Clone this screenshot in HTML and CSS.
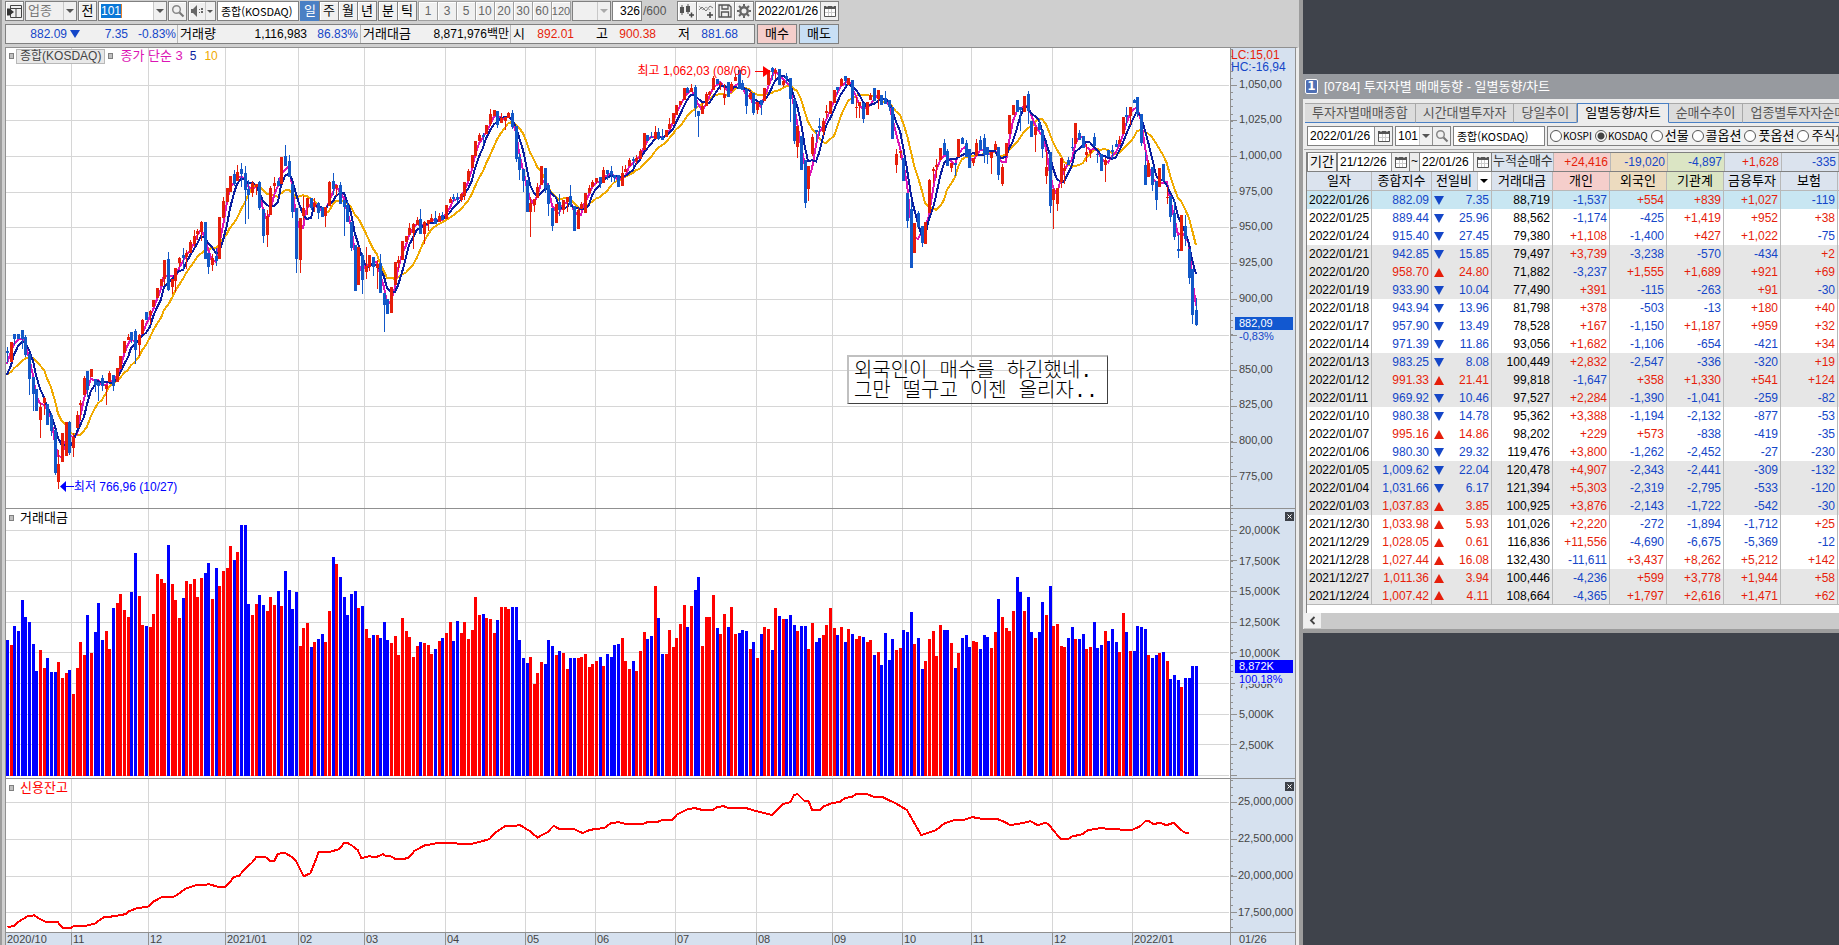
FILE: index.html
```html
<!DOCTYPE html>
<html lang="ko">
<head>
<meta charset="utf-8">
<title>종합(KOSDAQ) 차트</title>
<link rel="stylesheet" href="styles.css">
</head>
<body>
<main class="desk">
  <section class="win chart-win" aria-label="업종 차트">
    <div class="toolbar">
      <button class="btn w19" aria-label="창 전환"><svg width="15" height="13" viewBox="0 0 15 13"><path d="M3.500 5V.5h11v12h-11V8 M3.500 3.500h11 M9 3v9" fill="none" stroke="#444"/><path d="M0 3.500h2.500L7 7l-4.500 3.500H0z" fill="#333"/></svg></button>
      <div class="combo off w52"><select aria-label="구분"><option>업종</option></select><i class="arr"></i></div>
      <button class="btn ko w19">전</button>
      <div class="combo code"><input class="sel" aria-label="업종코드" value="101"><i class="arr"></i></div>
      <button class="btn w19" aria-label="검색"><svg class="ic" viewBox="0 0 14 14"><circle cx="5.500" cy="5.500" r="3.800" fill="none" stroke="#888" stroke-width="1.500"/><path d="M8.500 8.500l4 4" stroke="#777" stroke-width="2.200"/></svg></button>
      <button class="btn snd" aria-label="소리"><svg class="spk" width="14" height="12" viewBox="0 0 14 12"><path d="M1 4h2l4-4v12L3 8H1z" fill="#666"/><path d="M9 4h1v1H9zM9 7h1v1H9zM11 3h2v2h-2zM11 6h2v2h-2z" fill="#666"/></svg><i class="arr"></i></button>
      <input class="box name" aria-label="종목명" value="종합(KOSDAQ)">
      <div class="grp ko"><button class="btn on">일</button><button class="btn">주</button><button class="btn">월</button><button class="btn">년</button></div>
      <div class="grp ko"><button class="btn">분</button><button class="btn">틱</button></div>
      <div class="grp dim"><button class="btn">1</button><button class="btn">3</button><button class="btn">5</button><button class="btn">10</button><button class="btn">20</button><button class="btn">30</button><button class="btn">60</button><button class="btn">120</button></div>
      <div class="combo off w39"><select aria-label="분 선택"><option></option></select><i class="arr"></i></div>
      <input class="box cnt" aria-label="표시 개수" value="326"><span class="total">/600</span>
      <div class="grp tools">
        <button class="btn" aria-label="봉 추가"><svg class="ic" viewBox="0 0 14 14"><path d="M0 3h4v6H0zM6 2h4v6H6z" fill="#555"/><path d="M2 1v10M8 0v10" stroke="#555"/><path d="M9 11h5M11.500 8.500v5" stroke="#444" stroke-width="1.500"/></svg></button>
        <button class="btn" aria-label="지표 추가"><svg class="ic" viewBox="0 0 14 14"><path d="M0 6l3-3 4 4 4-5 3 2" fill="none" stroke="#777"/><path d="M0 2l4 4 3-3 4 3" fill="none" stroke="#aaa"/><path d="M8 11h6M11 8v6" stroke="#444" stroke-width="1.500"/></svg></button>
        <button class="btn" aria-label="저장"><svg class="ic" viewBox="0 0 14 14"><path d="M1 1h10l2 2v10H1zM4 1v4h6V1M3.500 13V8h7v5" fill="none" stroke="#555" stroke-width="1.300"/></svg></button>
        <button class="btn" aria-label="설정"><svg class="ic" viewBox="0 0 14 14"><circle cx="7" cy="7" r="3.700" fill="none" stroke="#666" stroke-width="2.400"/><path d="M7 0v2.500M7 11.500V14M0 7h2.500M11.500 7H14M2 2l2 2M10 10l2 2M12 2l-2 2M4 10l-2 2" stroke="#666" stroke-width="2"/></svg></button>
      </div>
      <div class="combo date"><input aria-label="조회일" value="2022/01/26"><button class="cal" aria-label="달력"><svg class="ic" viewBox="0 0 14 14"><use href="#cal"/></svg></button></div>
    </div>
    <div class="quote">
      <div class="qbox">
        <span class="q q1 dn">882.09<b class="tri"></b></span><span class="q q2 dn">7.35</span><span class="q q3 dn">-0.83%</span>
        <span class="q ql q4">거래량</span><span class="q q5">1,116,983</span><span class="q q6 dn">86.83%</span>
        <span class="q ql q7">거래대금</span><span class="q q8">8,871,976백만</span>
        <span class="q ql q9">시</span><span class="q q10 up">892.01</span><span class="q q11 ko">고</span><span class="q q10 up">900.38</span><span class="q q11 ko">저</span><span class="q q10 dn">881.68</span>
      </div>
      <button class="btn ko buy">매수</button><button class="btn ko sell">매도</button>
    </div>
    <div class="chart">
      <div class="pane price">
        <div class="plot">
          <svg id="price" class="fill" viewBox="0 0 1224 461" preserveAspectRatio="none"></svg>
          <div class="legend"><i class="mk"></i><span class="cap">종합(KOSDAQ)</span><i class="mk"></i><span class="m3">종가 단순 3</span><span class="m5">5</span><span class="m10">10</span></div>
          <div class="hi">최고 1,062,03 (08/06)<svg width="20" height="11" viewBox="0 0 20 11"><path d="M4 5h8v1H4zM12 0l8 5.500-8 5.500z" fill="red"/></svg></div>
          <div class="lo"><svg width="14" height="11" viewBox="0 0 14 11"><path d="M14 5H6v1h8zM6 0L0 5.500 6 11z" fill="#00f"/></svg>최저 766,96 (10/27)</div>
          <div class="note">외국인이 매수를 하긴했네.
그만 떨구고 이젠 올리자..</div>
        </div>
        <div class="axis">
          <svg id="ax1" class="fill" viewBox="0 0 64 461" preserveAspectRatio="none"></svg>
          <div class="lims"><span class="up">LC:15,01</span><span class="dn">HC:-16,94</span></div>
          <div class="labels l1"><span>1,050,00</span><span>1,025,00</span><span>1,000,00</span><span>975,00</span><span>950,00</span><span>925,00</span><span>900,00</span><span></span><span>850,00</span><span>825,00</span><span>800,00</span><span>775,00</span></div>
          <div class="tag t1"><b>882,09</b><span>-0,83%</span></div>
        </div>
      </div>
      <div class="pane volume">
        <div class="plot">
          <svg id="volume" class="fill" viewBox="0 0 1224 268" preserveAspectRatio="none"></svg>
          <div class="legend sub"><i class="mk"></i><span class="pt">거래대금</span></div>
        </div>
        <div class="axis">
          <svg id="ax2" class="fill" viewBox="0 0 64 268" preserveAspectRatio="none"></svg>
          <div class="labels l2"><span>20,000K</span><span>17,500K</span><span>15,000K</span><span>12,500K</span><span>10,000K</span><span>7,500K</span><span>5,000K</span><span>2,500K</span></div>
          <div class="tag t2"><b>8,872K</b><span>100,18%</span></div>
          <button class="x" aria-label="닫기"><svg width="9" height="9" viewBox="0 0 9 9"><path d="M2.500 2.500l4 4M6.500 2.500l-4 4" stroke="#fff"/></svg></button>
        </div>
      </div>
      <div class="pane credit">
        <div class="plot">
          <svg id="credit" class="fill" viewBox="0 0 1224 153" preserveAspectRatio="none"></svg>
          <div class="legend sub"><i class="mk"></i><span class="pt red">신용잔고</span></div>
        </div>
        <div class="axis">
          <svg id="ax3" class="fill" viewBox="0 0 64 153" preserveAspectRatio="none"></svg>
          <div class="labels l3"><span>25,000,000</span><span>22,500,000</span><span>20,000,000</span><span>17,500,000</span></div>
          <button class="x" aria-label="닫기"><svg width="9" height="9" viewBox="0 0 9 9"><path d="M2.500 2.500l4 4M6.500 2.500l-4 4" stroke="#fff"/></svg></button>
        </div>
      </div>
      <div class="dates">
        <div class="months"><span>2020/10</span><span>11</span><span>12</span><span>2021/01</span><span>02</span><span>03</span><span>04</span><span>05</span><span>06</span><span>07</span><span>08</span><span>09</span><span>10</span><span>11</span><span>12</span><span>2022/01</span></div>
        <div class="today">01/26</div>
      </div>
    </div>
  </section>

  <section class="trend-win" aria-label="투자자별 매매동향">
    <h1 class="title"><span class="no">1</span>[0784] 투자자별 매매동향 - 일별동향/차트</h1>
    <nav class="tabs"><a href="#a">투자자별매매종합</a><a href="#b">시간대별투자자</a><a href="#c">당일추이</a><a href="#d" class="cur">일별동향/차트</a><a href="#e">순매수추이</a><a href="#f">업종별투자자순매수</a></nav>
    <div class="filter">
      <div class="combo fdate"><input aria-label="기준일" value="2022/01/26"><button class="cal" aria-label="달력"><svg class="ic" viewBox="0 0 14 14"><use href="#cal"/></svg></button></div>
      <div class="combo fcode"><input aria-label="코드" value="101"><i class="arr"></i><button class="cal" aria-label="검색"><svg class="ic" viewBox="0 0 14 14"><circle cx="5.500" cy="5.500" r="3.800" fill="none" stroke="#888" stroke-width="1.500"/><path d="M8.500 8.500l4 4" stroke="#777" stroke-width="2.200"/></svg></button></div>
      <input class="box name fname" aria-label="업종명" value="종합(KOSDAQ)">
      <div class="radios">
        <label class="en"><input type="radio" name="m">KOSPI</label><label class="en"><input type="radio" name="m" checked>KOSDAQ</label><label><input type="radio" name="m">선물</label><label><input type="radio" name="m">콜옵션</label><label><input type="radio" name="m">풋옵션</label><label><input type="radio" name="m">주식선물</label>
      </div>
    </div>
    <div class="grid">
      <div class="sum">
        <button class="btn ko term">기간</button>
        <div class="combo sdate"><input aria-label="시작일" value="21/12/26"><button class="cal" aria-label="달력"><svg class="ic" viewBox="0 0 14 14"><use href="#cal"/></svg></button></div>
        <span class="til">~</span>
        <div class="combo sdate"><input aria-label="종료일" value="22/01/26"><button class="cal" aria-label="달력"><svg class="ic" viewBox="0 0 14 14"><use href="#cal"/></svg></button></div>
        <span class="cum">누적순매수</span><span class="s pink up">+24,416</span><span class="s sand dn">-19,020</span><span class="s green dn">-4,897</span><span class="s up">+1,628</span><span class="s dn">-335</span><span class="s"></span>
      </div>
      <table>
        <colgroup><col class="c1"><col class="c2"><col class="c2"><col class="c3"><col class="c4"><col class="c4"><col class="c4"><col class="c4"><col class="c4"><col class="c4"></colgroup>
        <thead><tr><th>일자</th><th>종합지수</th><th class="cmp">전일비<button class="dd" aria-label="전일비 선택"><i class="arr"></i></button></th><th>거래대금</th><th class="pink">개인</th><th class="sand">외국인</th><th class="green">기관계</th><th>금융투자</th><th>보험</th><th></th></tr></thead>
        <tbody id="rows"></tbody>
      </table>
    </div>
    <div class="scroll"><button aria-label="왼쪽으로"><svg width="7" height="9" viewBox="0 0 7 9"><path d="M5.500 1L2 4.500 5.500 8" fill="none" stroke="#444" stroke-width="1.800"/></svg></button></div>
  </section>
</main>
<svg class="defs" aria-hidden="true"><symbol id="cal" viewBox="0 0 14 14"><path d="M1.500 3.500h11v9h-11z" fill="#fff" stroke="#555"/><path d="M1 2h12v3H1z" fill="#555"/><path d="M4 1v2M10 1v2" stroke="#fff"/><path d="M2 8.500h10M5.500 5v7M8.500 5v7" stroke="#ccc"/></symbol></svg>
<script src="app.js"></script>
</body>
</html>
```
FILE: styles.css
```css
* { box-sizing: border-box; }
html, body { height: 100%; }
body, button, input, select { font-family: "Liberation Sans", "Noto Sans CJK KR", sans-serif; font-size: 12px; line-height: 16px; color: #000; }
body { margin: 0; overflow: hidden; background: #3f434b; }
button, input, select { margin: 0; padding: 0; border: 0; border-radius: 0; background: none; min-width: 0; }
select { appearance: none; }
.defs { position: absolute; width: 0; height: 0; }
.up { color: #e61e0a; }
.dn { color: #1446c8; }
.red { color: #f00; }
.pink { background: #f5cecb; }
.sand { background: #ecdbbf; }
.green { background: #dbe5c4; }
.ko, .ko .btn, .off select, .ql, th, .title, .tabs, .cum, .m3, .pt, .radios { font-size: 13px; }

.desk { display: grid; grid-template-columns: minmax(0, 1fr) 536px; height: 100vh; }
.chart-win { display: flex; flex-direction: column; height: 100vh; overflow: hidden; background: #cfcfcf; border-left: 2px solid #9c9c9c; border-right: 4px solid #9c9c9c; }

.btn, .combo, .box { display: flex; align-items: center; justify-content: center; height: 20px; border: 1px solid #808080; background: #f0f0f0; flex: none; white-space: nowrap; }
.btn { box-shadow: inset 1px 1px #fff; }
.combo input, .combo select, .box { background: #fff; }
.combo input, .combo select { flex: 1; width: 0; height: 18px; padding-left: 2px; }
.box { padding: 0 3px; }
.combo.off select { background: #f0f0f0; color: #777; opacity: 1; }
.arr { flex: none; width: 13px; height: 18px; display: flex; align-items: center; justify-content: center; border-left: 1px solid #c8c8c8; background: #f0f0f0; }
.arr::after { content: ""; border: 4px solid transparent; border-top-color: #555; border-bottom: 0; }
.cal { width: 18px; height: 18px; flex: none; display: flex; align-items: center; justify-content: center; border-left: 1px solid #909090; background: #f0f0f0; }
.ic { width: 14px; height: 14px; flex: none; }

.toolbar { display: flex; gap: 1px; height: 22px; padding: 1px 0 0 3px; flex: none; }
.w19 { width: 19px; }
.w52 { width: 52px; }
.w39 { width: 39px; }
.w39 .arr::after { border-top-color: #aaa; }
.code { width: 69px; background: #fff; }
.combo.code .sel { flex: none; width: 21px; height: 14px; margin: 0 auto 0 2px; padding: 0; background: #0a78d7; color: #fff; border-right: 1px solid #e08030; }
.snd { width: 28px; gap: 1px; }
.spk { flex: none; }
.snd .arr { width: 10px; }
.snd .arr::after { border-width: 3px; border-bottom: 0; }
.name { width: 82px; font-family: "Noto Sans CJK KR", sans-serif; font-size: 11px; }
.grp { display: flex; margin-right: 1px; }
.grp .btn { width: 20px; margin-right: -1px; }
.btn.on { background: #4a80c4; border-color: #4a80c4; color: #fff; box-shadow: none; }
.dim .btn { color: #666; border-color: #a0a0a0; }
.dim .btn:last-child { font-size: 11px; }
.cnt { width: 30px; text-align: right; padding: 0 1px; }
.total { width: 33px; padding-top: 2px; color: #555; }
.date { width: 84px; }

.quote { display: flex; gap: 2px; height: 25px; padding: 2px 0 0 3px; flex: none; }
.qbox { display: flex; align-items: center; width: 750px; height: 20px; background: #f0f0f0; border: 1px solid #808080; }
.q { height: 18px; line-height: 18px; text-align: right; white-space: nowrap; flex: none; }
.q1 { width: 74px; }
.tri { display: inline-block; margin-left: 3px; border: 5px solid transparent; border-top: 8px solid #1446c8; border-bottom: 0; }
.q2 { width: 48px; }
.q3 { width: 49px; padding-right: 1px; }
.ql { text-align: left; padding-left: 2px; border-left: 1px solid #b8b8b8; }
.q4 { width: 50px; }
.q5 { width: 80px; }
.q6 { width: 53px; padding-right: 2px; }
.q7 { width: 54px; }
.q8 { width: 96px; padding-right: 1px; }
.q9 { width: 16px; }
.q10 { width: 48px; }
.q11 { width: 34px; }
.buy, .sell { width: 40px; box-shadow: none; }
.buy { background: #f5cecb; }
.sell { background: #c8dff5; }

.chart { flex: 1; min-height: 0; display: flex; flex-direction: column; margin: 0 0 0 3px; border-left: 1px solid #909090; border-top: 1px solid #909090; border-right: 3px solid #ececec; background: #fff; color: #444; }
.pane { display: grid; grid-template-columns: minmax(0, 1fr) 66px; min-height: 0; border-bottom: 1px solid #909090; }
.price { flex: 462; }
.volume { flex: 269; }
.credit { flex: 154; }
.plot { position: relative; overflow: hidden; }
.axis { position: relative; display: flex; overflow: hidden; border-left: 1px solid #909090; border-right: 1px solid #909090; background: #d6e1ef; font-size: 11px; line-height: 12px; }
.fill { position: absolute; inset: 0; width: 100%; height: 100%; shape-rendering: crispEdges; }
.legend { position: relative; display: flex; align-items: center; height: 16px; margin: 0 0 0 3px; }
.legend.sub { height: 18px; }
.mk { width: 5px; height: 6px; border: 1px solid #808080; background: #c0c0c0; }
.cap { margin: 0 3px 0 2px; padding: 0 3px; height: 15px; line-height: 13px; border: 1px solid #b8b8b8; background: #e8e8e8; }
.m3 { margin-left: 7px; color: #dc14b4; }
.m5 { margin-left: 7px; color: #0a1ea0; }
.m10 { margin-left: 8px; color: #f0aa00; }
.pt { margin-left: 6px; color: #000; }
.pt.red { color: #f00; }
.hi, .lo { position: absolute; display: flex; align-items: center; height: 16px; white-space: nowrap; }
.hi { right: 37.500%; top: 3.300%; color: #f00; }
.lo { left: 4.400%; top: 93.500%; color: #00f; }
.note { position: absolute; left: 68.700%; top: 66.700%; width: 261px; padding: 5px 0 1px 5px; font-family: "Liberation Mono", "Noto Sans CJK KR", monospace; font-size: 20px; font-weight: 300; line-height: 20px; white-space: pre; color: #000; border: 1px solid #404040; border-top: 2px solid #c0c0c0; border-left: 2px solid #c0c0c0; }
.labels { position: relative; flex: 1; display: flex; flex-direction: column; padding-left: 8px; }
.labels span { flex: 1; display: flex; align-items: center; min-height: 0; }
.l1 { margin: 18px 0 15px; }
.l2 { margin: 5px 0 17px; }
.l3 { margin: 4px 0 2px; padding-left: 7px; }
.lims { position: absolute; z-index: 1; display: flex; flex-direction: column; font-size: 12px; top: 1px; left: 0; }
.tag { position: absolute; left: 4px; right: 2px; }
.tag b, .tag span { display: block; padding-left: 4px; font-weight: 400; }
.tag b { height: 13px; line-height: 13px; color: #fff; background: #1258d0; }
.tag span { color: #1446c8; }
.t1 { top: 58.400%; }
.t2 { top: 56%; }
.t2 b { background: #00f; }
.t2 span { color: #00f; background: #d6e1ef; height: 11px; }
.x { position: absolute; top: 3px; right: 1px; width: 9px; height: 9px; display: flex; background: #3c4048; }
.dates { flex: none; height: 12px; display: grid; grid-template-columns: minmax(0, 1fr) 66px; background: #d6e1ef; font-size: 11px; line-height: 12px; }
.months { display: grid; grid-template-columns: 65fr 77fr 77fr 73fr 66fr 81fr 80fr 70fr 80fr 81fr 76fr 70fr 69fr 81fr 80fr 98fr; }
.months span { border-left: 1px solid #909090; padding-left: 1px; min-width: 0; }
.months span:first-child { border-left: 0; }
.today { border-left: 1px solid #909090; border-right: 1px solid #909090; padding-left: 8px; }

.trend-win { align-self: start; margin-top: 74px; overflow: hidden; background: #ececec; padding-left: 1px; border-bottom: 4px solid #9c9c9c; }
.title { display: flex; align-items: center; gap: 6px; height: 25px; margin: 0 0 0 -1px; padding: 0 0 0 2px; background: #979a9f; color: #fff; font-weight: 400; }
.no { width: 13px; height: 15px; border: 1px solid #fff; border-radius: 2px; background: #5070b4; font: bold 12px/13px "DejaVu Sans", sans-serif; text-align: center; }
.tabs { display: flex; height: 24px; padding: 4px 0 0 1px; }
.tabs a { flex: none; height: 20px; padding: 0 7px; line-height: 18px; color: #555; text-decoration: none; background: #dcdcdc; border: 1px solid #a8a8a8; border-left: 0; border-bottom-color: #4a80c4; white-space: nowrap; }
.tabs a.cur { color: #000; background: #ececec; border: 1px solid #4a80c4; border-bottom-color: #ececec; }
.filter { display: flex; gap: 2px; padding: 3px 0 3px 3px; border-bottom: 1px solid #a8a8a8; }
.fdate { width: 86px; }
.fcode { width: 56px; }
.fname { width: 92px; }
.radios { flex: 1; display: flex; align-items: center; gap: 3px; height: 20px; padding-left: 2px; overflow: hidden; white-space: nowrap; border: 1px solid #808080; background: #f0f0f0; }
.radios label { flex: none; display: flex; align-items: center; gap: 2px; }
.radios .en { font-family: "Noto Sans CJK KR", sans-serif; font-size: 10px; gap: 1px; }
.radios input { appearance: none; width: 12px; height: 12px; border: 1px solid #555; border-radius: 50%; background: #fff; }
.radios input:checked { background: radial-gradient(#444 0 3px, #fff 4px); }
.grid { margin: 2px 0 0 2px; padding-bottom: 8px; border-left: 1px solid #808080; border-top: 1px solid #808080; background: #fff; overflow: hidden; }
.sum { display: flex; width: 590px; height: 19px; background: #dbe3ee; border-bottom: 1px solid #808080; }
.sum .btn, .sum .combo { height: 18px; border-top: 0; border-bottom: 0; }
.term { width: 30px; }
.sdate { width: 73px; }
.til { width: 9px; text-align: center; background: #ececec; }
.cum { width: 61px; padding-left: 1px; white-space: nowrap; color: #333; }
.s { width: 57px; padding: 1px 2px 0 0; text-align: right; border-left: 1px solid #b8b8b8; }
table { width: 588px; border-collapse: separate; border-spacing: 0; table-layout: fixed; }
.c1 { width: 65px; }
.c2 { width: 60px; }
.c3 { width: 61px; }
.c4 { width: 57px; }
th { height: 19px; padding: 0; font-weight: 400; background: #dbe3ee; border-right: 1px solid #b8b8b8; border-bottom: 1px solid #b8b8b8; line-height: 16px; white-space: nowrap; }
th.pink { background: #f5cecb; }
th.sand { background: #ecdbbf; }
th.green { background: #dbe5c4; }
.cmp { position: relative; padding-right: 15px; }
.dd { position: absolute; right: 0; top: 0; width: 14px; height: 18px; background: #fff; }
.dd .arr { background: #fff; }
.dd .arr::after { border-top-color: #000; }
td { height: 18px; padding: 0 2px 0 0; line-height: 16px; text-align: right; border-right: 1px solid #b8b8b8; white-space: nowrap; }
td:first-child { text-align: left; padding: 0 0 0 2px; }
tbody tr:last-child td { border-bottom: 1px solid #b8b8b8; }
tr.alt { background: #e6e6e6; }
tr.now { background: #c8e6f2; }
.chg { display: flex; justify-content: space-between; align-items: center; padding-left: 2px; }
.chg i { border: 5px solid transparent; }
.dn .chg i { border-top: 9px solid #1446c8; border-bottom: 0; }
.up .chg i { border-bottom: 9px solid #e61e0a; border-top: 0; }
.scroll { height: 16px; background: #cacaca; }
.scroll button { display: flex; align-items: center; justify-content: center; width: 17px; height: 15px; background: #f0f0f0; }
```
FILE: app.js
```js
// Candles: direction, body top, body bottom, wick top, wick bottom (thirds of a plot unit; 0 = no wick).
const early = `b933,938,921,968 r906,965 b882,898,0,915 b882,898 b870,898,0,926 b892,945,885,950 b942,1016,0,1064 b1010,1061,0,1112 b1046,1112 r1100,1140,1090,1193 r1073,1090,1070,1125 b1092,1155 b1125,1172,1120,1188 b1170,1302,0,1308 r1275,1328,1230,1350 r1178,1270 r1145,1248 b1145,1239,1143,1244 r1190,1224,1178,1251 r1125,1163,1113 r1088,1095,1080,1140 r1014,1066,1008 b993,1050,0,1070 r988,1011 b1017,1035,0,1055 b1025,1037,0,1083 b1014,1038,1005,1052 r1034,1048,0,1094 r1000,1026,993 b1005,1037,0,1052 r984,1026 r947,988 r903,938 r890,900,882 b876,900,0,910 b873,930,867,971 r885,914,882,948 r839,882,837 b816,840 r813,825,810,852 r780,800 r744,774 r717,738 r660,718,0,735 b657,750,636,753 r716,742,0,762 r684,722,0,756 r654,668,651,680 b645,653,624,690 r640,650,630,686 r606,640,600 r587,612,570,620 r573,582,567,600 r546,575,543,603 b546,656 b639,681,0,702 r654,675,642,692 b647,662,625,678 r531,656 r483,534,471 r444,486 r408,456 b402,431,390,438 r396,423,375 b387,401,369,440 b399,450,378,551 b447,465,420,537 r430,460,423,470 r432,440,0,465 b426,504,423,510 b507,588,0,609 r528,585,510,621 r444,525,438 r429,438,411,456 b423,438,414 r351,432 b348,378,315 b363,411,345 b432,515,0,534 b504,657,0,699 r534,660,0,699 r504,528,468,540 r474,500,0,525 b474,504,0,510 r489,500,474,516 b489,520,486,537 b500,530 r501,528,0,561 r426,498,423 b423,447,399,465 r435,444,0,468 b435,492,426 b480,501,0,588 b495,546,483 b545,624,0,633 b615,753 r620,735 b645,720,640,762 r678,696,621,717 r645,680,0,692 b650,680,0,708 r672,684,660,747 b669,759,642 b759,795,0,876 b777,822 r741,819 r666,735 r660,669,648,690 r603,660 r588,606 r564,585,549 r552,578,549,627 r540,555,531 b537,582,507 r546,582,543,612 r540,552,0,573 r534,546,522 b534,552,513 r528,545,518 b525,540,516 r495,537 r477,488,471 b470,478,462,486 b470,480,460,486`;
const late = `r432,450,429,456 r396,438,0,450 r363,393,357 r315,354 r273,318 r255,273,249 b255,262,250,283 r225,252 r192,222,177,228 r180,198 b183,225,0,235 r205,219,190 r201,213,0,240 r189,204,186 b189,231,180,237 b228,327,0,335 b321,360,310,390 b357,393,0,426 b390,486 r459,486,440,561 r447,465,0,486 r411,444,399 r348,405 b354,414,0,430 b405,462,400,498 b474,528,0,543 r462,519 b456,480,432,498 r450,480,0,492 r441,455,0,486 b438,465,405,471 b468,543 r480,537,474 r462,477,457 r429,489 r414,430,405 r396,411,390 r384,396,0,402 b381,402,0,414 r360,399,350 b360,372,0,390 b362,374,348,396 b375,384,0,396 b375,411 r369,408,348 r357,366,345 r330,348,324 b326,332,321,350 r324,332,315,342 r303,326,297 r249,300 b255,273 b260,265,246 r246,268,228 b246,266,234,270 b260,270,237 r240,261 r222,238,204 r189,222 r165,195 r153,165 r114,150 b114,129,110 r114,126,102 b111,174,105,200 b183,197,0,261 r168,192,160 r132,168,126 r126,135,123 r84,120,78 b87,102 r99,106,96,120 r132,144,102,165 b96,141 r102,123,96 r81,93,72 b60,117 b99,120,90 b117,168,0,192 r129,147,123 b129,189,0,195 r156,180,0,192 b150,165,0,195 r114,153 r60,105 b54,66,51,90 r60,68,54,87 b57,105 r93,105,90,110 b78,88,69,100 b84,147,0,215 b147,273,0,282 r228,291,0,324 b258,360 b330,459,0,474 r348,417,0,453 r261,312,252,318 b240,247,0,276 b228,235,204,258 r213,246,204,258 r183,190,165,204 r153,192 r120,159 b111,120,0,132 r87,108,84 b78,93,0,110 r84,105 b90,162 r171,175,140,204 r156,168,0,204 b159,207,0,219 r156,195 r135,150,129 b114,153 r120,147,0,178 b135,165 b145,162,123 b150,170,0,183 b171,267 r312,345,297,369 r303,310,0,325 b324,393 b429,513,0,534 b477,654,456 r519,609 b489,530,483 b528,579,0,591 r516,582 r390,489,387 r358,364,350,400 r345,352,327,384 r294,330 b279,315,267 b303,348,297 r339,354,0,366 b340,345,0,378 r267,321 b264,282,261 b279,321,270 b297,354 r325,339,0,348 r279,318,267 b270,300,258 b264,315,252,339 b291,315,0,342 r306,324,0,372 r282,300,273 b291,375,0,390 r351,402,342,408 r279,318 r195,252 r165,195 b150,186 b172,180,0,243 r138,186 b132,183,123,222 b213,261 r231,255,0,306 b219,241,207 b240,297,0,324 r351,378,300,402 b306,468,0,489 r417,450,0,537 r414,462,0,483 r324,396,0,415 r354,363,342,402 b330,345,321 b291,294,264,303 r219,282 b249,270,240 b258,294 r306,315,282,336 r300,309,0,324 b261,288,249 b312,316,309,339 b312,363 r330,345,324,396 b300,320 b300,306,285,327 b282,290,270 r270,282,258 r201,252 b195,201,171,228 r171,198,0,225 b150,160,147 b141,192,0,200 b192,279,0,288 b345,405,306 r339,381,330 b351,405,0,423 b393,450,0,480 r354,411 b342,393 r441,444,410,462 b438,501,0,516 b489,561,450,570 b597,602,555,624 r495,603 b528,567,495,588 b597,684,0,702 b657,795,0,822 b780,825,744,828`;

// Turnover bars: direction and top edge, thirds of a plot unit, floor at 830.
const turnover = `b423 r438 b381 b396 b303 b354 b369 b435 b516 r453 r507 b477 b519 b519 r489 r537 r522 b513 r585 r507 r429 r468 b348 r462 b399 b312 b423 r396 r450 b327 r312 r285 r333 r354 b279 b162 r291 r378 b381 r384 r345 r225 r240 r252 b138 r255 r303 r357 b297 r246 r255 r240 r294 r237 b222 b192 r300 b207 r261 r216 r207 r141 b183 r159 b78 b78 b315 r348 r315 b288 b318 r336 r294 r318 b276 r321 b216 b273 b330 b279 r441 r387 r372 b444 r429 b420 b405 r429 r336 b174 r195 b234 b294 b348 b285 b276 r327 b321 r390 r417 b408 r408 b417 b369 b423 r432 r411 r468 r357 r396 r414 r474 r441 b429 r432 r438 r465 b450 r426 b417 r402 r369 b426 b366 r402 r369 r420 r393 r294 r348 b345 r357 r360 r402 b363 r324 r324 r330 b324 b324 b423 b477 b492 r474 r555 r522 r489 b495 b423 b441 r468 b456 r462 r510 b477 b477 r477 r474 r465 r504 r495 r486 b474 r501 b465 b474 b438 b435 r417 r486 r510 b486 r516 r456 r399 b420 b411 r261 b357 b465 r465 r393 r444 r417 r375 r318 b384 r321 b273 b234 r441 r354 r354 r288 b387 r405 r345 b384 r324 r405 b402 b393 b396 r450 b429 r477 b405 r384 r390 b453 r327 b351 r360 b360 b348 b378 r396 b381 b381 r450 r372 b429 b417 r408 r378 r327 r387 b408 r384 b429 r390 b405 r420 r411 b414 r429 r423 b468 r459 b498 b402 b483 b420 r453 r447 b393 b399 b339 r435 b417 b510 r486 r420 r396 r471 r378 b393 b393 r432 b507 r462 b417 b408 b444 r426 r429 b450 b408 b414 r447 r399 b300 r354 r387 r396 r336 b234 b279 r336 b294 b399 r417 b399 b309 r348 b261 r381 r375 r441 r444 b417 b384 r420 b420 b405 r450 r444 b369 b447 b438 r396 b426 b390 b429 r459 r342 b399 r456 b456 b381 b384 b390 r468 b477 b468 r462 b459 r486 b540 b528 b543 r564 b537 b537 b501 b501`;

// Margin balance: x,y pairs; the two halves of the year are digitised at different x scales.
const creditA = `19,1281 37,1275 45,1265 72,1246 87,1245 100,1255 118,1266 147,1266 157,1281 166,1284 176,1284 185,1278 212,1278 240,1269 262,1251 290,1247 318,1241 325,1233 345,1224 375,1218 388,1204 408,1191 432,1191 443,1187 470,1165 495,1155 530,1152 555,1161 570,1160 580,1148 591,1130 605,1126 620,1105 638,1086 648,1071 672,1071 684,1083 693,1083 702,1063 712,1058 722,1059 740,1072 748,1081 768,1128 785,1119 806,1056 830,1056 858,1047 869,1030 878,1028 890,1036 905,1050 914,1074 933,1068 950,1071 968,1062 978,1068 990,1069 1000,1077 1020,1077 1035,1071 1048,1052 1073,1036 1105,1029 1140,1029 1190,1032 1238,1017 1250,999 1278,978 1300,978 1314,974 1340,993 1359,1012 1385,996 1400,977 1415,987 1452,987 1474,999 1488,991 1505,986 1528,984 1545,969 1564,966`;
const creditB = `19,966 37,972 72,972 84,966 105,966 116,960 140,960 150,943 173,928 190,924 208,930 230,930 240,921 254,918 265,924 305,924 330,934 363,945 388,912 404,906 412,885 420,882 436,903 445,904 453,930 470,930 480,918 500,908 515,906 526,894 542,890 552,882 575,882 590,890 612,892 640,910 665,930 697,1005 730,990 750,969 770,960 790,960 812,951 836,957 870,958 880,963 897,975 920,970 942,963 958,975 975,968 982,972 1009,1016 1026,1017 1035,1009 1058,1002 1070,990 1098,984 1130,987 1168,990 1188,978 1200,962 1208,963 1217,972 1232,968 1246,975 1263,968 1285,996 1296,1000`;

const NS = 'http://www.w3.org/2000/svg';
const months = [65, 142, 219, 292, 358, 439, 519, 589, 669, 750, 826, 896, 965, 1046, 1126];
const FIRST = 1, LAST = 1190;

function draw(id, d, stroke, width) {
  const p = document.createElementNS(NS, 'path');
  p.setAttribute('d', d);
  if (width) {
    p.setAttribute('fill', 'none');
    p.setAttribute('stroke', stroke);
    p.setAttribute('stroke-width', width);
  } else p.setAttribute('fill', stroke);
  document.getElementById(id).append(p);
}
const rect = (x, y, w, h) => `M${x} ${y}h${w}v${h}h${-w}z`;

function gridlines(id, ys, height) {
  draw(id, ys.map(y => rect(0, y, 1223, 1)).join('') + months.map(x => rect(x, 0, 1, height)).join(''), '#d6d6d6');
}
function ticks(id, ys, parts, height) {
  const step = (ys[ys.length - 1] - ys[0]) / (ys.length - 1) / parts;
  let d = ys.map(y => rect(0, y, 6, 1)).join('');
  for (let y = ys[0] % step; y < height; y += step) d += rect(0, Math.round(y), 2, 1);
  draw(id, d, '#909090');
}

const priceY = [37, 72, 108, 144, 179, 215, 251, 287, 322, 358, 394, 429];
const volumeY = [21, 51, 82, 113, 143, 174, 205, 235, 266];
const creditY = [23, 60, 97, 133];
gridlines('price', priceY, 461);
gridlines('volume', volumeY, 268);
gridlines('credit', creditY, 153);
ticks('ax1', priceY, 5, 461);
ticks('ax2', volumeY, 5, 268);
ticks('ax3', creditY, 5, 153);

function parse(text, shift) {
  return text.split(' ').map(s => {
    const v = s.slice(1).split(',').map(n => +n ? Math.round((+n + shift) / 3 - 8) : null);
    return { up: s[0] === 'r', top: v[0], bottom: v[1], high: v[2] ?? v[0], low: v[3] ?? v[1] };
  });
}
const candles = [...parse(early, 0), ...parse(late, 30)];
const xOf = (i, n) => Math.round(FIRST + i * (LAST - FIRST) / (n - 1));

const before = [990, 1000, 1000, 1010, 1020, 1050, 1060, 1020, 960].map(v => v / 3 - 8);
const closes = [...before, ...candles.map(c => c.up ? c.top : c.bottom)];
function average(span) {
  return 'M' + candles.map((c, i) => {
    const part = closes.slice(i + 10 - span, i + 10);
    return xOf(i, candles.length) + ' ' + (part.reduce((a, b) => a + b) / span).toFixed(1);
  }).join('L');
}
draw('price', average(10), '#f0aa00', 2);
draw('price', average(3), '#dc14b4', 2);
draw('price', average(5), '#0a1ea0', 2);
for (const up of [true, false]) {
  draw('price', candles.map((c, i) => {
    if (c.up !== up) return '';
    const x = xOf(i, candles.length);
    return rect(x - 1, c.top, 3, Math.max(1, c.bottom - c.top)) + rect(x, c.high, 1, Math.max(1, c.low - c.high));
  }).join(''), up ? '#e61e0a' : '#1258c8');
}

const bars = turnover.split(' ');
for (const k of ['r', 'b']) {
  draw('volume', bars.map((s, i) => {
    if (s[0] !== k) return '';
    const y = Math.round(s.slice(1) / 3 - 10);
    return rect(xOf(i, bars.length) - 1, y, 3, 267 - y);
  }).join(''), k === 'r' ? '#f00' : '#00f');
}

const points = (text, scale, x0) => text.split(' ').map(s => {
  const [x, y] = s.split(',');
  return (x / scale + x0).toFixed(1) + ' ' + (y / 3 - 279).toFixed(1);
});
draw('credit', 'M' + [...points(creditA, 2.529, -6), ...points(creditB, 2.24, 604)].join('L'), '#f00', 2);

const days = `2022/01/26 882.09 -7.35 88,719 -1,537 +554 +839 +1,027 -119
2022/01/25 889.44 -25.96 88,562 -1,174 -425 +1,419 +952 +38
2022/01/24 915.40 -27.45 79,380 +1,108 -1,400 +427 +1,022 -75
2022/01/21 942.85 -15.85 79,497 +3,739 -3,238 -570 -434 +2
2022/01/20 958.70 +24.80 71,882 -3,237 +1,555 +1,689 +921 +69
2022/01/19 933.90 -10.04 77,490 +391 -115 -263 +91 -30
2022/01/18 943.94 -13.96 81,798 +378 -503 -13 +180 +40
2022/01/17 957.90 -13.49 78,528 +167 -1,150 +1,187 +959 +32
2022/01/14 971.39 -11.86 93,056 +1,682 -1,106 -654 -421 +34
2022/01/13 983.25 -8.08 100,449 +2,832 -2,547 -336 -320 +19
2022/01/12 991.33 +21.41 99,818 -1,647 +358 +1,330 +541 +124
2022/01/11 969.92 -10.46 97,527 +2,284 -1,390 -1,041 -259 -82
2022/01/10 980.38 -14.78 95,362 +3,388 -1,194 -2,132 -877 -53
2022/01/07 995.16 +14.86 98,202 +229 +573 -838 -419 -35
2022/01/06 980.30 -29.32 119,476 +3,800 -1,262 -2,452 -27 -230
2022/01/05 1,009.62 -22.04 120,478 +4,907 -2,343 -2,441 -309 -132
2022/01/04 1,031.66 -6.17 121,394 +5,303 -2,319 -2,795 -533 -120
2022/01/03 1,037.83 +3.85 100,925 +3,876 -2,143 -1,722 -542 -30
2021/12/30 1,033.98 +5.93 101,026 +2,220 -272 -1,894 -1,712 +25
2021/12/29 1,028.05 +0.61 116,836 +11,556 -4,690 -6,675 -5,369 -12
2021/12/28 1,027.44 +16.08 132,430 -11,611 +3,437 +8,262 +5,212 +142
2021/12/27 1,011.36 +3.94 100,446 -4,236 +599 +3,778 +1,944 +58
2021/12/24 1,007.42 +4.11 108,664 -4,365 +1,797 +2,616 +1,471 +62`;
const tone = v => v[0] === '-' ? 'dn' : 'up';
document.getElementById('rows').innerHTML = days.split('\n').map((line, i) => {
  const [day, index, change, value, ...net] = line.split(' ');
  const kind = i === 0 ? 'now' : Math.floor(i / 3) % 2 ? 'alt' : '';
  const t = tone(change);
  return `<tr class="${kind}"><td>${day}</td><td class="${t}">${index}</td>` +
    `<td class="${t}"><div class="chg"><i></i>${change.slice(1)}</div></td><td>${value}</td>` +
    net.map(v => `<td class="${tone(v)}">${v}</td>`).join('') + '<td></td></tr>';
}).join('');
```
